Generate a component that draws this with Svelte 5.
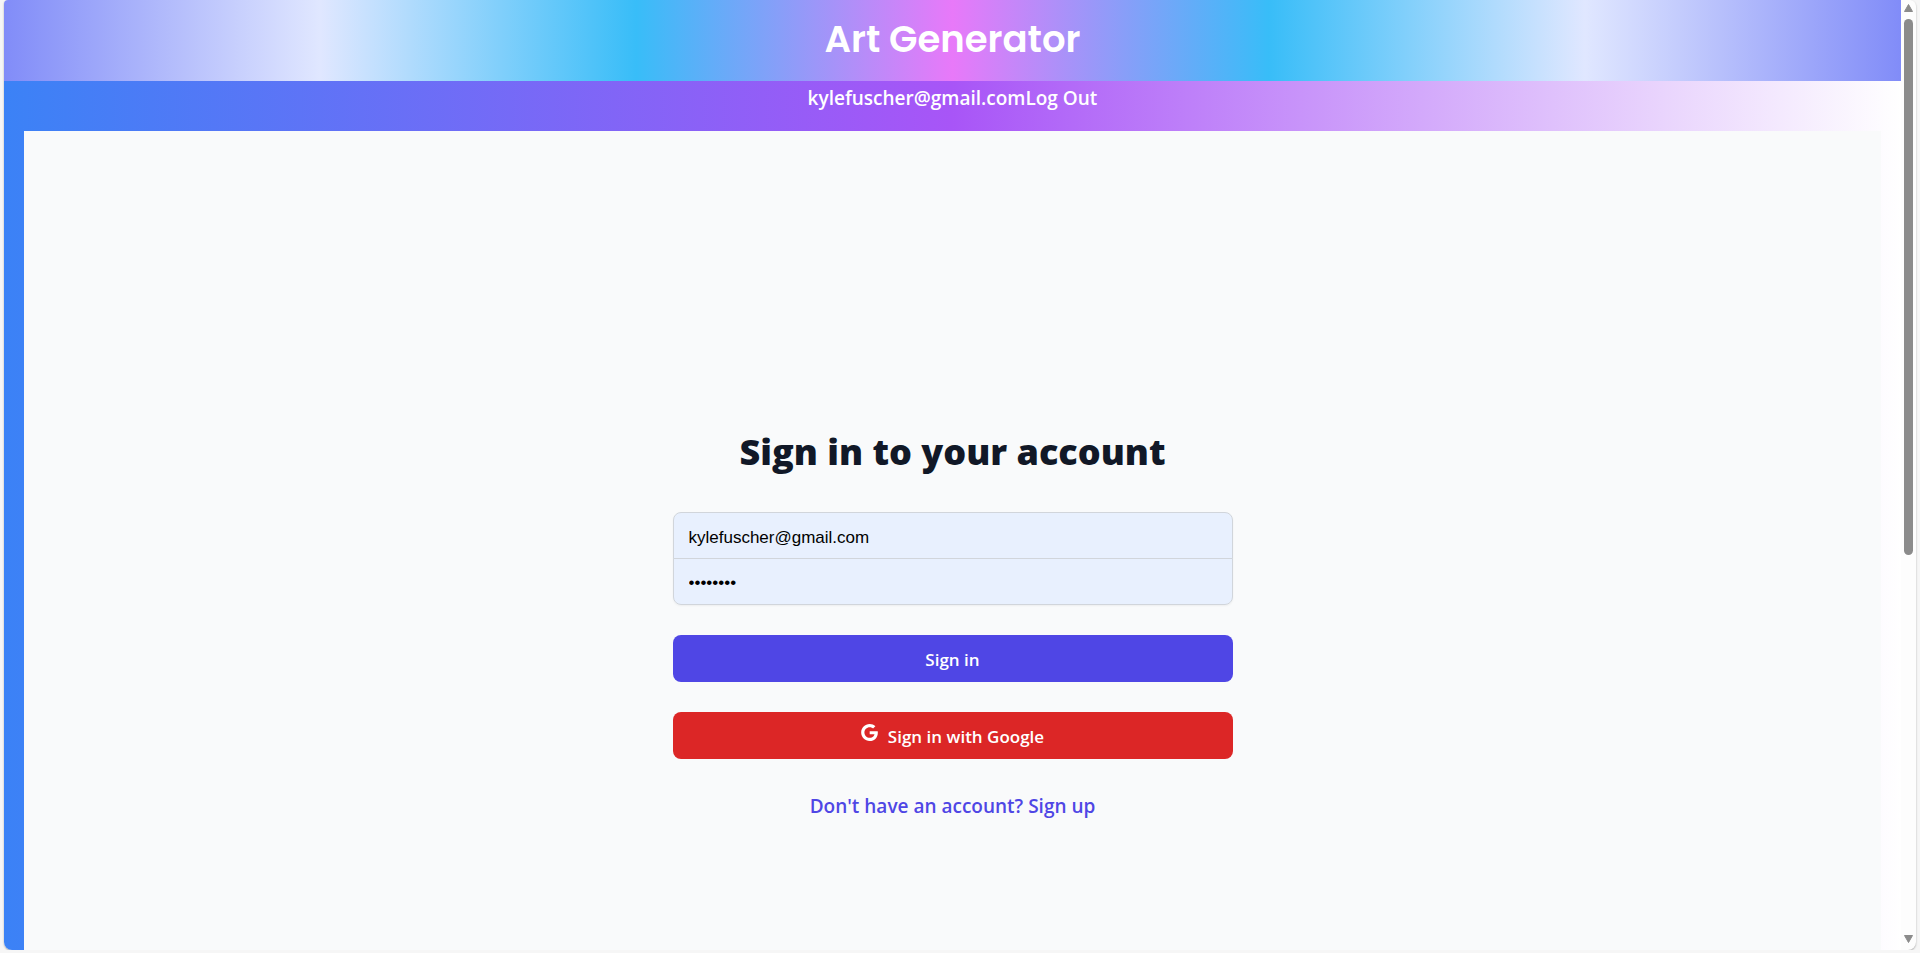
<script>
  let email = $state('kylefuscher@gmail.com');
  let password = $state('password');
</script>

<div class="window">
  <div class="page">
    <header>
      <h1>Art Generator</h1>
    </header>
    <div class="body">
      <nav><span>kylefuscher@gmail.com</span><button type="button">Log Out</button></nav>
      <main>
        <form onsubmit={(e) => e.preventDefault()}>
          <h2>Sign in to your account</h2>
          <div class="fields">
            <input type="email" aria-label="Email address" autocomplete="off" bind:value={email} />
            <input type="password" aria-label="Password" autocomplete="off" bind:value={password} />
          </div>
          <button class="action primary" type="submit">Sign in</button>
          <button class="action google" type="button">
            <svg viewBox="0 0 24 24" aria-hidden="true">
              <path
                d="M12.24 10.285V14.4h6.806c-.275 1.765-2.056 5.174-6.806 5.174-4.095 0-7.439-3.389-7.439-7.574s3.345-7.574 7.439-7.574c2.33 0 3.891.989 4.785 1.849l3.254-3.138C18.189 1.186 15.479 0 12.24 0c-6.635 0-12 5.365-12 12s5.365 12 12 12c6.926 0 11.52-4.869 11.52-11.726 0-.788-.085-1.39-.189-1.989H12.24z"
              />
            </svg>
            <span>Sign in with Google</span>
          </button>
          <a href="#signup">Don't have an account? Sign up</a>
        </form>
      </main>
    </div>
  </div>
  <div class="scrollbar" aria-hidden="true">
    <svg viewBox="0 0 9 8"><path d="M4.5 0.5 8.5 7.5H0.5Z" /></svg>
    <div class="track"><div class="thumb"></div></div>
    <svg viewBox="0 0 9 8"><path d="M4.5 7.5 8.5 0.5H0.5Z" /></svg>
  </div>
</div>

<style>
  :global(body) {
    margin: 0;
    background: #f6f6f6;
  }
  .window {
    display: flex;
    height: calc(100vh - 3px);
    margin: 0 4px;
    overflow: hidden;
    border-radius: 4px 6px 8px 8px;
    background: #fdfdfd;
    box-shadow: 0 1px 2px rgba(0, 0, 0, 0.3);
    font-family: 'Segoe UI', 'Open Sans', 'Noto Sans', sans-serif;
  }
  .page {
    display: flex;
    flex: 1;
    flex-direction: column;
    min-width: 0;
  }
  header {
    padding: 9px 0 12px;
    background: linear-gradient(
      to right,
      #818cf8,
      #e0e7ff,
      #38bdf8,
      #e879f9,
      #38bdf8,
      #e0e7ff,
      #818cf8
    );
    color: #fff;
    text-align: center;
  }
  h1 {
    margin: 0;
    font: 600 37px/60px Poppins, Inter, sans-serif;
  }
  .body {
    display: flex;
    flex: 1;
    flex-direction: column;
    padding: 0 20px;
    background: linear-gradient(to right, #3b82f6, #a855f7, #fff);
  }
  nav {
    display: flex;
    justify-content: center;
    height: 50px;
    color: #fff;
    font-size: 19px;
    font-weight: 600;
    line-height: 34px;
  }
  nav button {
    align-self: flex-start;
    padding: 0;
    border: 0;
    background: none;
    color: inherit;
    font: inherit;
  }
  main {
    display: flex;
    flex: 1;
    align-items: center;
    justify-content: center;
    padding-top: 168px;
    background: #f9fafb;
  }
  form {
    display: flex;
    flex-direction: column;
    width: 560px;
    text-align: center;
  }
  h2 {
    margin: 0 0 38px;
    color: #111827;
    font-size: 36px;
    font-weight: 800;
    line-height: 45px;
  }
  .fields {
    display: flex;
    flex-direction: column;
    margin-bottom: 30px;
    border-radius: 8px;
    box-shadow: 0 1px 2px rgba(0, 0, 0, 0.05);
  }
  input {
    box-sizing: border-box;
    height: 47px;
    padding: 4px 15px 0;
    border: 1px solid #d1d5db;
    border-radius: 8px 8px 0 0;
    outline: 0;
    background: #e8f0fe;
    color: #000;
    font: 17px 'Liberation Sans', Arial, sans-serif;
  }
  input + input {
    margin-top: -1px;
    padding-top: 3px;
    border-radius: 0 0 8px 8px;
  }
  .action {
    display: flex;
    justify-content: center;
    height: 47px;
    margin-bottom: 30px;
    padding: 12px 16px;
    border: 0;
    border-radius: 8px;
    color: #fff;
    font: inherit;
    font-size: 17px;
    font-weight: 600;
    line-height: 25px;
  }
  .primary {
    background: #4f46e5;
  }
  .google {
    background: #dc2626;
  }
  .google svg {
    width: 17px;
    height: 17px;
    margin-right: 10px;
    fill: #fff;
  }
  form a {
    align-self: center;
    margin-top: 3px;
    color: #4f46e5;
    font-size: 19px;
    font-weight: 600;
    line-height: 28px;
    text-decoration: none;
  }
  .scrollbar {
    display: flex;
    flex-direction: column;
    align-items: center;
    width: 15px;
    padding: 4px 0 7px;
    box-sizing: border-box;
  }
  .scrollbar svg {
    width: 9px;
    height: 8px;
    fill: #8b8b8b;
    stroke: #8b8b8b;
    stroke-linejoin: round;
  }
  .track {
    flex: 1;
    width: 9px;
    padding: 7px 0;
  }
  .thumb {
    height: 59%;
    border-radius: 5px;
    background: #8b8b8b;
  }
</style>
